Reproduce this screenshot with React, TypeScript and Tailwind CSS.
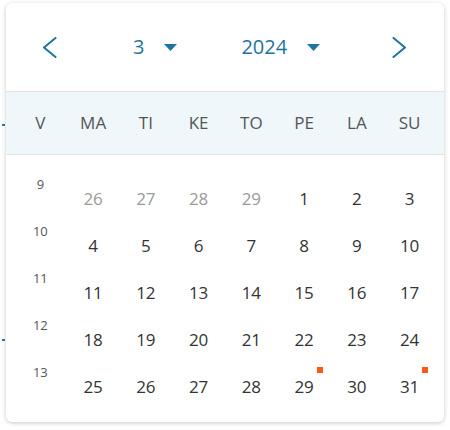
const weekDays = ["MA", "TI", "KE", "TO", "PE", "LA", "SU"];

type Day = { n: number; other?: boolean; mark?: boolean };

const weeks: { no: number; days: Day[] }[] = [
  {
    no: 9,
    days: [
      { n: 26, other: true },
      { n: 27, other: true },
      { n: 28, other: true },
      { n: 29, other: true },
      { n: 1 },
      { n: 2 },
      { n: 3 },
    ],
  },
  { no: 10, days: [4, 5, 6, 7, 8, 9, 10].map((n) => ({ n })) },
  { no: 11, days: [11, 12, 13, 14, 15, 16, 17].map((n) => ({ n })) },
  { no: 12, days: [18, 19, 20, 21, 22, 23, 24].map((n) => ({ n })) },
  {
    no: 13,
    days: [
      { n: 25 },
      { n: 26 },
      { n: 27 },
      { n: 28 },
      { n: 29, mark: true },
      { n: 30 },
      { n: 31, mark: true },
    ],
  },
];

function Caret() {
  return (
    <svg width="13" height="7" viewBox="0 0 13 7" className="text-[#1d74a0]">
      <path d="M0 0 H13 L6.5 7 Z" fill="currentColor" />
    </svg>
  );
}

// thin chevron, drawn to match the ~13x19 arrows of the picker
function Chevron({ dir }: { dir: "left" | "right" }) {
  return (
    <svg width="15" height="21" viewBox="0 0 15 21" fill="none" className="text-[#1d74a0]">
      <path
        d={dir === "left" ? "M13.5 1 L2 10.5 L13.5 20" : "M1.5 1 L13 10.5 L1.5 20"}
        stroke="currentColor"
        strokeWidth="2"
        strokeLinecap="round"
        strokeLinejoin="round"
      />
    </svg>
  );
}

export default function App() {
  return (
    <div
      className="relative w-[450px] h-[430px] bg-white"
      style={{ fontFamily: '"Open Sans", "Noto Sans", sans-serif' }}
    >
      {/* bits of the page underneath */}
      <span className="absolute left-[2px] top-[124px] w-[3px] h-[2px] bg-[#2a78a8]" />
      <span className="absolute left-[2px] top-[339px] w-[3px] h-[2px] bg-[#2a78a8]" />

      <div className="absolute left-[6px] top-[3px] w-[438px] h-[419px] bg-white rounded-[6px] shadow-[0_1px_4px_rgba(0,0,0,0.22)] overflow-hidden">
        {/* Month / year header */}
        <div className="h-[88px] flex items-center text-[#1d74a0] text-[20px]">
          <span className="ml-[36px]">
            <Chevron dir="left" />
          </span>
          <span className="ml-[76px] leading-none">3</span>
          <span className="ml-[20px]">
            <Caret />
          </span>
          <span className="ml-[64px] leading-none">2024</span>
          <span className="ml-[20px]">
            <Caret />
          </span>
          <span className="ml-[72px]">
            <Chevron dir="right" />
          </span>
        </div>

        {/* Weekday labels */}
        <div className="h-[64px] bg-[#eff7fa] border-y border-[#dfe4e7] px-[8px] grid grid-cols-8 items-center text-[17px] text-[#555]">
          <div className="text-center">V</div>
          {weekDays.map((d) => (
            <div key={d} className="text-center">
              {d}
            </div>
          ))}
        </div>

        {/* Days */}
        <div className="px-[8px] pt-[19px]">
          {weeks.map((w) => (
            <div key={w.no} className="grid grid-cols-8 h-[47px]">
              <div className="text-center text-[13px] text-[#555] pt-[2px] leading-[16px]">
                {w.no}
              </div>
              {w.days.map((d, i) => (
                <div key={i} className="flex items-center justify-center pt-[2px]">
                  <span
                    className={`relative text-[17px] leading-none ${
                      d.other ? "text-[#9a9a9a]" : "text-[#333]"
                    }`}
                  >
                    {d.n}
                    {d.mark && (
                      <span className="absolute -right-[9px] -top-[11px] w-[6px] h-[6px] bg-[#ff5515]" />
                    )}
                  </span>
                </div>
              ))}
            </div>
          ))}
        </div>
      </div>
    </div>
  );
}
